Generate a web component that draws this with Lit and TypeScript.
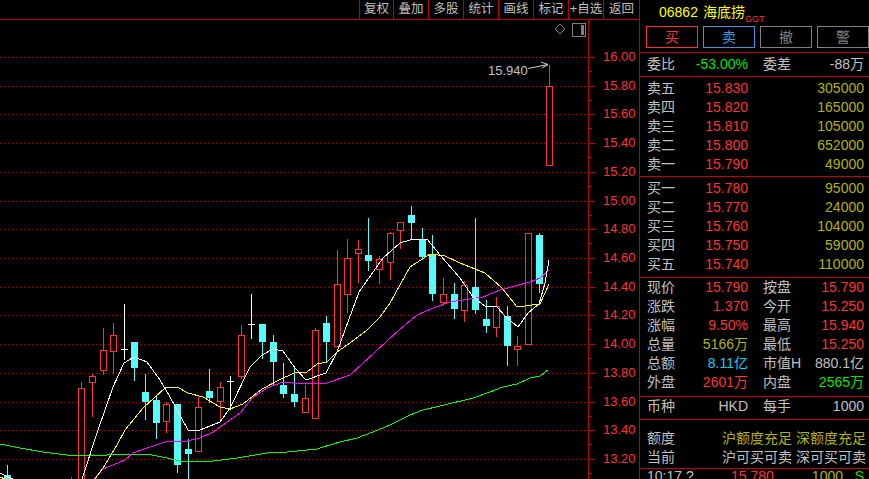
import { LitElement, html, svg, css } from 'lit';
import { customElement } from 'lit/decorators.js';

type Kind = 'up' | 'down' | 'flat';
// left, kind, body top, body bottom, wick top, wick bottom
type Candle = [number, Kind, number, number, number, number];

const CANDLES: Candle[] = [
  [4, 'down', 475, 490, 465, 490],
  [68, 'up', 490, 500, 477, 500],
  [78, 'up', 388, 490, 382, 490],
  [89, 'up', 376, 382, 374, 417],
  [100, 'up', 350, 370, 328, 375],
  [110, 'up', 335, 351, 323, 374],
  [121, 'flat', 349, 349, 304, 360],
  [131, 'down', 342, 368, 342, 381],
  [142, 'down', 392, 402, 374, 420],
  [153, 'down', 400, 423, 395, 439],
  [163, 'up', 404, 421, 402, 433],
  [174, 'down', 404, 465, 404, 473],
  [185, 'down', 449, 454, 439, 479],
  [195, 'up', 407, 451, 397, 451],
  [206, 'down', 391, 398, 369, 403],
  [217, 'up', 387, 401, 382, 421],
  [227, 'flat', 381, 381, 376, 410],
  [238, 'up', 335, 376, 325, 379],
  [248, 'flat', 324, 324, 294, 339],
  [259, 'down', 324, 342, 324, 359],
  [270, 'down', 342, 362, 335, 385],
  [280, 'down', 385, 394, 363, 398],
  [291, 'down', 394, 402, 368, 407],
  [302, 'up', 398, 412, 385, 413],
  [312, 'up', 330, 418, 328, 418],
  [323, 'down', 323, 342, 316, 363],
  [334, 'up', 284, 346, 250, 346],
  [344, 'up', 258, 294, 239, 313],
  [355, 'up', 249, 253, 240, 283],
  [365, 'down', 255, 261, 218, 271],
  [376, 'up', 259, 269, 256, 284],
  [387, 'up', 233, 262, 232, 280],
  [397, 'up', 222, 230, 222, 249],
  [408, 'down', 215, 223, 206, 239],
  [419, 'down', 239, 257, 228, 260],
  [429, 'down', 254, 294, 235, 301],
  [440, 'up', 294, 302, 278, 306],
  [451, 'down', 294, 309, 283, 319],
  [461, 'up', 285, 310, 281, 322],
  [472, 'down', 287, 310, 218, 314],
  [483, 'down', 319, 326, 300, 333],
  [493, 'up', 306, 327, 297, 337],
  [504, 'down', 316, 346, 306, 366],
  [514, 'up', 346, 349, 336, 366],
  [525, 'up', 233, 344, 233, 344],
  [536, 'down', 235, 284, 233, 293],
  [546, 'up', 86, 165, 65, 165],
];

const MA_WHITE = '82,479 98,430 113,387 124,363 134,357 147,362 160,380 170,397 188,430 200,430 220,422 230,408 250,367 262,355 273,349 283,351 295,368 306,380 326,373 337,352 345,330 359,292 383,258 400,243 410,240 427,239 440,255 460,278 473,297 485,306 497,307 505,316 518,327 528,313 539,304 545,283 549,260';
const MA_YELLOW = '95,479 105,465 117,445 125,430 143,408 165,388 177,387 188,393 203,397 220,407 230,409 243,404 262,389 283,378 297,372 307,372 317,364 327,362 337,352 350,343 367,330 380,317 390,303 410,267 430,254 445,256 460,263 485,273 502,288 517,307 540,304 549,284';
const MA_MAGENTA = '94,479 103,469 125,460 133,453 147,448 165,442 187,441 200,438 213,432 240,413 252,398 267,388 283,382 303,384 327,383 350,375 399,330 417,315 433,308 450,302 463,300 483,297 500,290 530,282 540,278 549,270';
const MA_GREEN = '0,444 20,448 43,452 67,455 107,455 133,454 147,454 167,458 180,461 213,461 237,458 267,453 287,452 317,449 333,444 340,442 357,438 373,432 390,425 410,415 423,410 440,406 473,398 490,392 503,387 517,384 530,378 540,376 548,370';

const PRICES = ['16.00', '15.80', '15.60', '15.40', '15.20', '15.00', '14.80', '14.60', '14.40', '14.20', '14.00', '13.80', '13.60', '13.40', '13.20'];
const gridY = (i: number) => Math.round(57 + i * 28.72);

const TOOLS = ['复权', '叠加', '多股', '统计', '画线', '标记', '+自选', '返回'];

@customElement('kline-chart')
export class KlineChart extends LitElement {
  static styles = css`
    :host {
      display: block;
      flex: 1;
      min-height: 0;
    }
    svg {
      display: block;
    }
    .grid {
      stroke: #c00000;
      stroke-dasharray: 1 3;
      shape-rendering: crispEdges;
    }
    .axis {
      stroke: #c00000;
      shape-rendering: crispEdges;
    }
    .price {
      fill: #ff3232;
      font: 13px "Liberation Sans", sans-serif;
    }
    .peak {
      fill: #c0c0c0;
      font: 13px "Liberation Sans", sans-serif;
    }
    .ma {
      fill: none;
      stroke-width: 1;
      shape-rendering: crispEdges;
    }
    .candle {
      shape-rendering: crispEdges;
    }
  `;

  private candle([left, kind, top, bottom, wickTop, wickBottom]: Candle) {
    const cx = left + 3.5;
    if (kind === 'flat') {
      return svg`<g class="candle" stroke="#fff">
        <line x1=${cx} x2=${cx} y1=${wickTop} y2=${wickBottom}></line>
        <line x1=${left} x2=${left + 7} y1=${top + 0.5} y2=${top + 0.5}></line>
      </g>`;
    }
    const color = kind === 'up' ? '#ff3232' : '#54fcfc';
    return svg`<g class="candle">
      <line x1=${cx} x2=${cx} y1=${wickTop} y2=${wickBottom} stroke=${color}></line>
      ${kind === 'up'
        ? svg`<rect x=${left + 0.5} y=${top + 0.5} width="6" height=${bottom - top} fill="#000" stroke=${color}></rect>`
        : svg`<rect x=${left} y=${top} width="7" height=${bottom - top} fill=${color}></rect>`}
    </g>`;
  }

  render() {
    return html`
      <svg width="639" height="459" viewBox="0 20 639 459">
        ${PRICES.map((_, i) => svg`<line class="grid" x1="0" x2="588" y1=${gridY(i) + 0.5} y2=${gridY(i) + 0.5}></line>`)}
        ${CANDLES.map((c) => this.candle(c))}
        <polyline class="ma" stroke="#00ff00" points=${MA_GREEN}></polyline>
        <polyline class="ma" stroke="#ff00ff" points=${MA_MAGENTA}></polyline>
        <polyline class="ma" stroke="#ffff00" points=${MA_YELLOW}></polyline>
        <polyline class="ma" stroke="#ffffff" points=${MA_WHITE}></polyline>
        <polyline class="ma" stroke="#ffffff" points="0,473 8,477 13,479"></polyline>
        <polyline class="ma" stroke="#ffff00" points="0,477 5,479"></polyline>

        <line class="axis" x1="588.5" x2="588.5" y1="20" y2="479"></line>
        ${PRICES.map((p, i) => svg`
          <line class="axis" x1="588" x2="595" y1=${gridY(i) + 0.5} y2=${gridY(i) + 0.5}></line>
          <line class="axis" x1="588" x2="592" y1=${gridY(i) + 14.5} y2=${gridY(i) + 14.5}></line>
          <text class="price" x="603" y=${gridY(i) + 4}>${p}</text>
        `)}

        <text class="peak" x="488" y="75">15.940</text>
        <path d="M528 68.5 L548 64.5 M541 62 L548 64.5 L542 68" fill="none" stroke="#d0d0d0"></path>

        <path d="M560 24 L565 29 L560 34 L555 29 Z" fill="none" stroke="#808080"></path>
        <rect x="572.5" y="23.5" width="13" height="13" fill="none" stroke="#808080" class="candle"></rect>
        <rect x="581" y="25" width="3" height="10" fill="#808080" class="candle"></rect>
      </svg>
    `;
  }
}

@customElement('quote-panel')
export class QuotePanel extends LitElement {
  static styles = css`
    :host {
      display: block;
      width: 229px;
      height: 479px;
      overflow: hidden;
      font: 14px "Liberation Sans", "Noto Sans CJK SC", sans-serif;
      color: #c0c0c0;
    }
    .title {
      height: 26px;
      padding-left: 19px;
      display: flex;
      align-items: flex-start;
      line-height: 24px;
      color: #ffff00;
    }
    .title .code {
      margin-right: 5px;
    }
    .title sub {
      color: #ff3232;
      font-size: 9px;
      line-height: 10px;
      margin-top: 14px;
      vertical-align: baseline;
    }
    .actions {
      display: flex;
      gap: 5px;
      padding-left: 6px;
      height: 22px;
      margin-bottom: 4px;
    }
    .actions div {
      width: 52px;
      box-sizing: border-box;
      border: 1px solid #808080;
      color: #808080;
      text-align: center;
      line-height: 20px;
    }
    .actions .buy {
      border-color: #ff3232;
      color: #ff3232;
    }
    .actions .sell {
      border-color: #3c96e0;
      color: #3c96e0;
    }
    .section {
      border-top: 1px solid #c80000;
      box-sizing: border-box;
    }
    .ratio {
      height: 24px;
      padding-top: 2px;
    }
    .sells {
      height: 100px;
      padding-top: 2px;
    }
    .buys {
      height: 101px;
      padding-top: 2px;
    }
    .stats {
      height: 119px;
    }
    .meta {
      height: 23px;
    }
    .quota {
      height: 49px;
      padding-top: 9px;
    }
    .row {
      display: grid;
      grid-template-columns: 101px 101px;
      column-gap: 15px;
      padding-left: 7px;
      height: 19px;
      line-height: 19px;
      white-space: nowrap;
    }
    .cell {
      display: flex;
      justify-content: space-between;
    }
    .wide {
      display: flex;
      justify-content: space-between;
      padding: 0 3px 0 7px;
      height: 19px;
      line-height: 19px;
      white-space: nowrap;
    }
    .tick {
      display: grid;
      grid-template-columns: 84px 42px 70px 21px;
      padding-left: 7px;
      line-height: 14px;
      white-space: nowrap;
    }
    .right {
      text-align: right;
    }
    .red {
      color: #ff3232;
    }
    .olive {
      color: #b4b400;
    }
    .green {
      color: #00e600;
    }
    .cyan {
      color: #00d2ff;
    }
  `;

  private pair(label: string, value: string, tone = '') {
    return html`<div class="cell"><span>${label}</span><span class=${tone}>${value}</span></div>`;
  }

  private level(label: string, price: string, volume: string) {
    return html`<div class="row">
      ${this.pair(label, price, 'red')}
      ${this.pair('', volume, 'olive')}
    </div>`;
  }

  private stat(a: string, av: string, at: string, b: string, bv: string, bt: string) {
    return html`<div class="row">${this.pair(a, av, at)}${this.pair(b, bv, bt)}</div>`;
  }

  render() {
    return html`
      <div class="title">
        <span class="code">06862</span><span>海底捞</span><sub>GGT</sub>
      </div>
      <div class="actions">
        <div class="buy">买</div>
        <div class="sell">卖</div>
        <div>撤</div>
        <div>警</div>
      </div>
      <div class="section ratio">
        ${this.stat('委比', '-53.00%', 'green', '委差', '-88万', '')}
      </div>
      <div class="section sells">
        ${this.level('卖五', '15.830', '305000')}
        ${this.level('卖四', '15.820', '165000')}
        ${this.level('卖三', '15.810', '105000')}
        ${this.level('卖二', '15.800', '652000')}
        ${this.level('卖一', '15.790', '49000')}
      </div>
      <div class="section buys">
        ${this.level('买一', '15.780', '95000')}
        ${this.level('买二', '15.770', '24000')}
        ${this.level('买三', '15.760', '104000')}
        ${this.level('买四', '15.750', '59000')}
        ${this.level('买五', '15.740', '110000')}
      </div>
      <div class="section stats">
        ${this.stat('现价', '15.790', 'red', '按盘', '15.790', 'red')}
        ${this.stat('涨跌', '1.370', 'red', '今开', '15.250', 'red')}
        ${this.stat('涨幅', '9.50%', 'red', '最高', '15.940', 'red')}
        ${this.stat('总量', '5166万', 'olive', '最低', '15.250', 'red')}
        ${this.stat('总额', '8.11亿', 'cyan', '市值H', '880.1亿', '')}
        ${this.stat('外盘', '2601万', 'red', '内盘', '2565万', 'green')}
      </div>
      <div class="section meta">
        ${this.stat('币种', 'HKD', '', '每手', '1000', '')}
      </div>
      <div class="section quota">
        <div class="wide"><span>额度</span><span class="olive">沪额度充足 深额度充足</span></div>
        <div class="wide"><span>当前</span><span>沪可买可卖 深可买可卖</span></div>
      </div>
      <div class="section tick">
        <span>10:17 ?</span>
        <span class="red">15.780</span>
        <span class="olive right">1000</span>
        <span class="green right">S</span>
      </div>
    `;
  }
}

@customElement('app-root')
export class AppRoot extends LitElement {
  static styles = css`
    :host {
      display: flex;
      width: 869px;
      height: 479px;
      overflow: hidden;
      background: #000;
    }
    .left {
      width: 639px;
      display: flex;
      flex-direction: column;
      border-right: 1px solid #c00000;
    }
    .toolbar {
      height: 19px;
      flex: none;
      display: flex;
      justify-content: flex-end;
      border-bottom: 1px solid #c00000;
      font: 12.5px "Liberation Sans", "Noto Sans CJK SC", sans-serif;
      color: #c0c0c0;
    }
    .toolbar div {
      width: 34px;
      border-left: 1px solid #c00000;
      text-align: center;
      line-height: 19px;
      white-space: nowrap;
    }
    .toolbar div:first-child {
      width: 33px;
    }
    .toolbar div:last-child {
      width: 35px;
    }
  `;

  render() {
    return html`
      <div class="left">
        <div class="toolbar">
          ${TOOLS.map((t) => html`<div>${t}</div>`)}
        </div>
        <kline-chart></kline-chart>
      </div>
      <quote-panel></quote-panel>
    `;
  }
}

declare global {
  interface HTMLElementTagNameMap {
    'app-root': AppRoot;
  }
}
